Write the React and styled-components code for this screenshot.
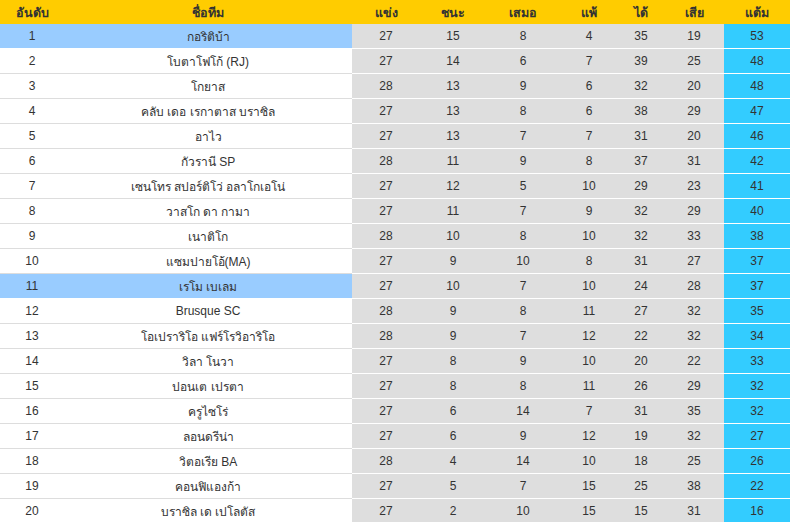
import React from "react";
import styled, { createGlobalStyle } from "styled-components";

const G = createGlobalStyle`
  body{margin:0;background:#fff;font-family:"Liberation Sans",Arial,sans-serif;overflow:hidden;}
`;
const cols = "64px 288px 68px 66px 74px 58px 46px 60px 66px";
const Row = styled.div`
  display:grid;grid-template-columns:${cols};height:25px;font-size:12px;color:#333;
`;
const HeadRow = styled(Row)`
  background:#ffcc00;height:24px;font-weight:bold;color:#333;font-size:12.5px;
`;
const Cell = styled.div`
  display:flex;align-items:center;justify-content:center;box-sizing:border-box;
  ${p => p.$kind === "hl" && "background:#99ccff;border-bottom:1px solid #fff;"}
  ${p => p.$kind === "plain" && "background:#fff;border-bottom:1px solid #ddd;"}
  ${p => p.$kind === "stat" && "background:#dedede;border-bottom:1px solid #fff;"}
  ${p => p.$kind === "pts" && "background:#33ccff;border-bottom:1px solid #fff;"}
  ${p => p.$head && "border:none;"}
`;
const HCell = styled(Cell)`padding-top:1px;`;

const data = [
["กอริติบ้า",27,15,8,4,35,19,53],
["โบตาโฟโก้ (RJ)",27,14,6,7,39,25,48],
["โกยาส",28,13,9,6,32,20,48],
["คลับ เดอ เรกาตาส บราซิล",27,13,8,6,38,29,47],
["อาไว",27,13,7,7,31,20,46],
["กัวรานี SP",28,11,9,8,37,31,42],
["เซนโทร สปอร์ติโว่ อลาโกเอโน่",27,12,5,10,29,23,41],
["วาสโก ดา กามา",27,11,7,9,32,29,40],
["เนาติโก",28,10,8,10,32,33,38],
["แซมปายโอ้(MA)",27,9,10,8,31,27,37],
["เรโม เบเลม",27,10,7,10,24,28,37],
["Brusque SC",28,9,8,11,27,32,35],
["โอเปราริโอ แฟร์โรวิอาริโอ",28,9,7,12,22,32,34],
["วิลา โนวา",27,8,9,10,20,22,33],
["ปอนเต เปรตา",27,8,8,11,26,29,32],
["ครูไซโร่",27,6,14,7,31,35,32],
["ลอนดรีน่า",27,6,9,12,19,32,27],
["วิตอเรีย BA",28,4,14,10,18,25,26],
["คอนฟิแองก้า",27,5,7,15,25,38,22],
["บราซิล เด เปโลตัส",27,2,10,15,15,31,16],
];
const heads = ["อันดับ","ชื่อทีม","แข่ง","ชนะ","เสมอ","แพ้","ได้","เสีย","แต้ม"];

export default function App(){
  return (<div>
    <G/>
    <HeadRow>{heads.map(h=><HCell key={h} $head>{h}</HCell>)}</HeadRow>
    {data.map((r,i)=>{
      const hl = i===0||i===10;
      return (<Row key={i}>
        <Cell $kind={hl?"hl":"plain"}>{i+1}</Cell>
        <Cell $kind={hl?"hl":"plain"}>{r[0]}</Cell>
        {r.slice(1,7).map((v,j)=><Cell key={j} $kind="stat">{v}</Cell>)}
        <Cell $kind="pts">{r[7]}</Cell>
      </Row>);
    })}
  </div>);
}
